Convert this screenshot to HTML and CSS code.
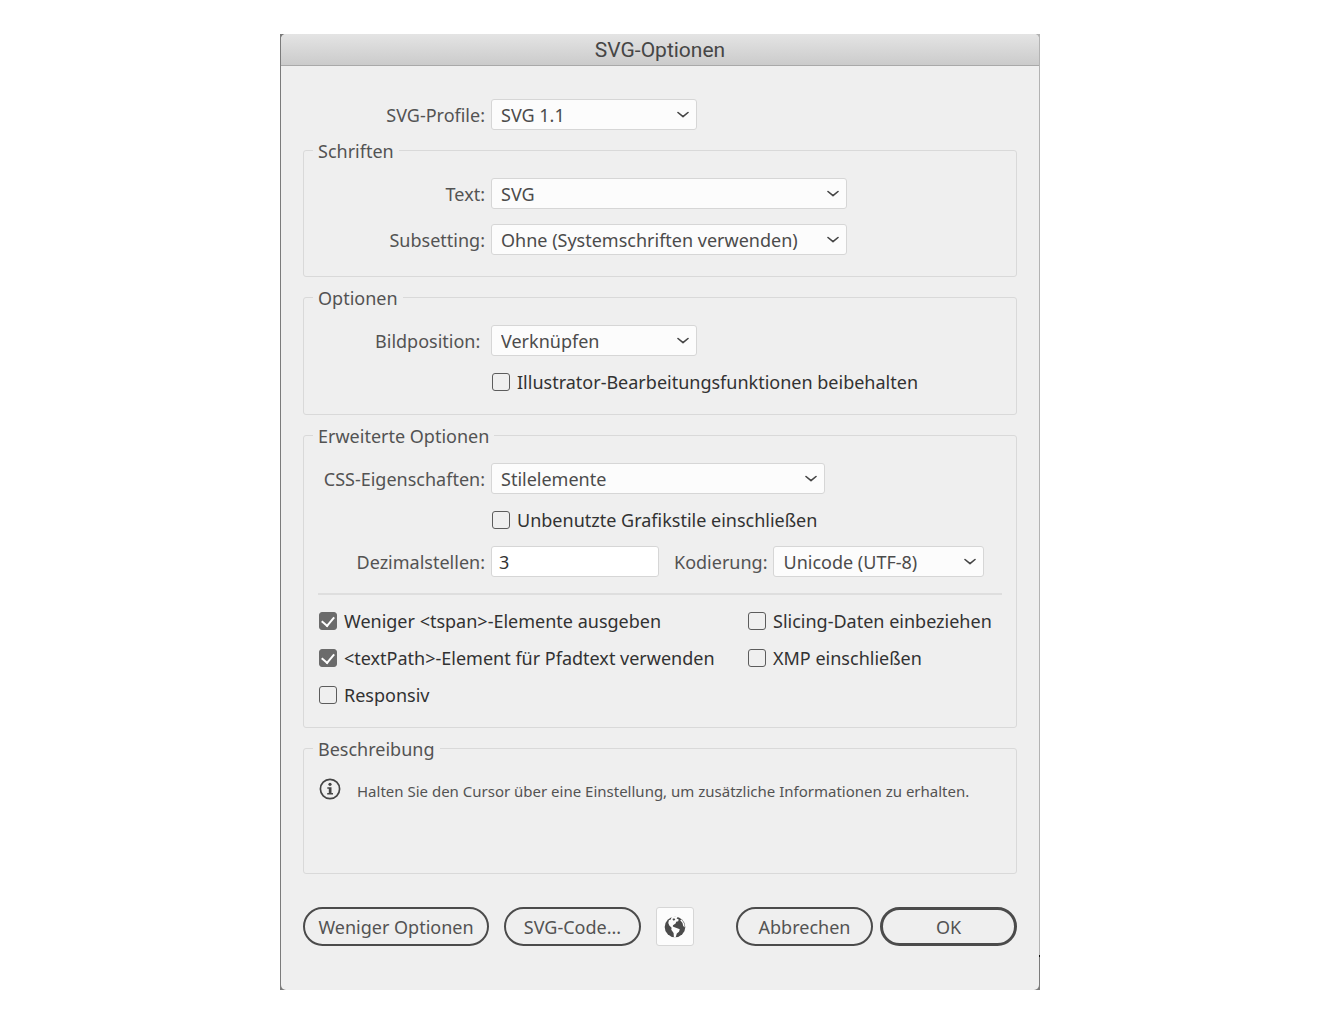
FILE: index.html
```html
<!DOCTYPE html>
<html lang="de">
<head>
    <meta charset="UTF-8">
    <meta name="viewport" content="width=device-width, initial-scale=1.0">
    <title>SVG-Optionen</title>
    <link rel="stylesheet" href="styles.css">
</head>
<body>
    <svg width="0" height="0" class="sprite" aria-hidden="true">
        <symbol id="chevron" viewBox="0 0 12 8">
            <path d="M1 1.500 L6 5.700 L11 1.500" fill="none" stroke="#454545" stroke-width="1.600" stroke-linecap="round" stroke-linejoin="round"/>
        </symbol>
    </svg>

    <div class="window">
        <form class="dialog">
            <header class="titlebar">
                <h1>SVG-Optionen</h1>
            </header>

            <div class="content">
                <div class="row profile-row">
                    <label class="row-label" for="profile">SVG-Profile:</label>
                    <span class="select select-small">
                        <select id="profile"><option>SVG 1.1</option></select>
                        <svg class="chevron"><use href="#chevron"/></svg>
                    </span>
                </div>

                <fieldset>
                    <legend>Schriften</legend>
                    <div class="rows">
                        <div class="row">
                            <label class="row-label" for="text">Text:</label>
                            <span class="select select-large">
                                <select id="text"><option>SVG</option></select>
                                <svg class="chevron"><use href="#chevron"/></svg>
                            </span>
                        </div>
                        <div class="row">
                            <label class="row-label" for="subsetting">Subsetting:</label>
                            <span class="select select-large">
                                <select id="subsetting"><option>Ohne (Systemschriften verwenden)</option></select>
                                <svg class="chevron"><use href="#chevron"/></svg>
                            </span>
                        </div>
                    </div>
                </fieldset>

                <fieldset>
                    <legend>Optionen</legend>
                    <div class="rows">
                        <div class="row">
                            <label class="row-label" for="position">Bildposition:&nbsp;</label>
                            <span class="select select-small">
                                <select id="position"><option>Verknüpfen</option></select>
                                <svg class="chevron"><use href="#chevron"/></svg>
                            </span>
                        </div>
                        <label class="check indent"><input type="checkbox">Illustrator-Bearbeitungsfunktionen beibehalten</label>
                    </div>
                </fieldset>

                <fieldset>
                    <legend>Erweiterte Optionen</legend>
                    <div class="rows">
                        <div class="row">
                            <label class="row-label" for="css">CSS-Eigenschaften:</label>
                            <span class="select select-medium">
                                <select id="css"><option>Stilelemente</option></select>
                                <svg class="chevron"><use href="#chevron"/></svg>
                            </span>
                        </div>
                        <label class="check indent"><input type="checkbox">Unbenutzte Grafikstile einschließen</label>
                        <div class="row">
                            <label class="row-label" for="decimals">Dezimalstellen:</label>
                            <input class="number" id="decimals" type="text" value="3">
                            <label class="encoding-label" for="encoding">Kodierung:</label>
                            <span class="select select-encoding">
                                <select id="encoding"><option>Unicode (UTF-8)</option></select>
                                <svg class="chevron"><use href="#chevron"/></svg>
                            </span>
                        </div>
                        <hr>
                        <div class="checks">
                            <label class="check"><input type="checkbox" checked>Weniger &lt;tspan&gt;-Elemente ausgeben</label>
                            <label class="check"><input type="checkbox">Slicing-Daten einbeziehen</label>
                            <label class="check"><input type="checkbox" checked>&lt;textPath&gt;-Element für Pfadtext verwenden</label>
                            <label class="check"><input type="checkbox">XMP einschließen</label>
                            <label class="check"><input type="checkbox">Responsiv</label>
                        </div>
                    </div>
                </fieldset>

                <fieldset class="description">
                    <legend>Beschreibung</legend>
                    <div class="hint">
                        <svg width="22" height="22" viewBox="0 0 22 22" aria-hidden="true">
                            <circle cx="11" cy="11" r="9.600" fill="none" stroke="#454545" stroke-width="1.700"/>
                            <circle cx="11" cy="6.300" r="1.600" fill="#454545"/>
                            <path d="M8.300 9.200h4.200v5.800h1.500v1.500H8.200V15h1.600v-4.300H8.300z" fill="#454545"/>
                        </svg>
                        <p>Halten Sie den Cursor über eine Einstellung, um zusätzliche Informationen zu erhalten.</p>
                    </div>
                </fieldset>

                <footer class="buttons">
                    <button type="button" class="button button-wide">Weniger Optionen</button>
                    <button type="button" class="button">SVG-Code...</button>
                    <button type="button" class="web-button" aria-label="Im Browser anzeigen">
                        <svg width="22" height="22" viewBox="0 0 22 22" aria-hidden="true">
                            <circle cx="11" cy="11" r="10.300" fill="#4b4b4b"/>
                            <path d="M7.500 1.300 L10.200 0.500 L13.500 1 L12.600 2.600 L14.700 3.500 L14.200 5.200 L12.200 5.800 L11.600 7.600 L9 9.200 L8.800 10.600 L10.600 11.200 L15.800 13.200 L15 15.800 L12.800 17.600 L11.600 21.400 L9.900 21.300 L9.600 17 L7.300 13.800 L7.600 11.800 L5.300 9.600 L4.300 7 L4.900 4.300 L6.800 3.400 Z" fill="#fcfcfc"/>
                            <path d="M8.300 3 L10.200 2.200 L11.300 3.700 L9.700 4.800 Z" fill="#4b4b4b"/>
                            <path d="M16.200 4.300 L17.700 3.500 L20.300 7.700 L20.700 11.500 L19.200 10 L18.500 7 Z" fill="#fcfcfc"/>
                        </svg>
                    </button>
                    <span class="confirm">
                        <button type="button" class="button">Abbrechen</button>
                        <button type="submit" class="button button-default">OK</button>
                    </span>
                </footer>
            </div>
        </form>
    </div>
</body>
</html>
```

FILE: styles.css
```css
* {
    box-sizing: border-box;
}

body {
    margin: 0;
    background: #fff;
    color: #535353;
    font-family: "Noto Sans", "Open Sans", sans-serif;
    font-size: 18px;
    line-height: 22px;
}

.sprite {
    position: absolute;
}

/* The strip behind the dialog shows at its sides and corners */
.window {
    max-width: 760px;
    margin: 34px auto;
    padding: 0 1px;
    background:
        linear-gradient(#7b7b7b, #7b7b7b) left / 50% 100% no-repeat,
        linear-gradient(to top, #7b7b7b 33px, #111 33px, #111 35px, #b3b3b3 35px);
}

.dialog {
    background: #efefef;
    border-radius: 5px;
    overflow: hidden;
}

.titlebar {
    height: 32px;
    background: linear-gradient(#e4e4e4, #cbcbcb);
    border-bottom: 1px solid #a9a9a9;
}

.titlebar h1 {
    margin: 0;
    color: #464646;
    font-family: Roboto, "Liberation Sans", sans-serif;
    font-size: 21px;
    font-weight: normal;
    line-height: 32px;
    text-align: center;
}

.content {
    padding: 33px 22px 44px;
}

fieldset {
    min-width: 0;
    margin: 7px 0 0;
    padding: 15px 14px 21px;
    border: 1px solid #d9d9d9;
    border-radius: 3px;
}

legend {
    margin-left: -5px;
    padding: 2px 5px 0;
    line-height: 24px;
}

.rows {
    display: flex;
    flex-direction: column;
    gap: 15px;
}

.row {
    display: flex;
    align-items: center;
    gap: 6px;
}

.profile-row {
    padding: 0 15px;
}

.row-label {
    width: 167px;
    text-align: right;
    white-space: nowrap;
}

.select {
    position: relative;
    height: 31px;
}

.select-small {
    width: 206px;
}

.select-encoding {
    width: 211px;
}

.select-medium {
    width: 334px;
}

.select-large {
    width: 356px;
}

.select select {
    width: 100%;
    height: 100%;
    padding: 0 30px 0 9px;
    appearance: none;
    background: #fcfcfc;
    border: 1px solid #d6d6d6;
    border-radius: 3px;
    color: #4b4b4b;
    font: inherit;
}

.chevron {
    position: absolute;
    top: 12px;
    right: 8px;
    width: 12px;
    height: 8px;
    pointer-events: none;
}

.number {
    width: 168px;
    height: 31px;
    padding: 0 7px;
    background: #fff;
    border: 1px solid #d6d6d6;
    border-radius: 3px;
    color: #323232;
    font: inherit;
}

.encoding-label {
    margin-left: 9px;
}

.check {
    display: flex;
    align-items: center;
    gap: 7px;
    color: #323232;
    white-space: nowrap;
}

.check input {
    display: grid;
    place-items: center;
    flex: none;
    width: 18px;
    height: 18px;
    margin: 0 0 0 1px;
    appearance: none;
    border: 1px solid #5c5c5c;
    border-radius: 3px;
}

.check input:checked {
    background: #6b6b6b;
    border-color: #6b6b6b;
}

.check input:checked::after {
    content: "";
    width: 6px;
    height: 10px;
    margin-top: -3px;
    border: solid #fff;
    border-width: 0 2px 2px 0;
    transform: rotate(40deg);
}

.indent {
    margin-left: 173px;
}

hr {
    width: 100%;
    height: 2px;
    margin: 1px 0 0;
    background: #dedede;
    border: 0;
}

.checks {
    display: grid;
    grid-template-columns: 429px 1fr;
    row-gap: 15px;
}

.description {
    min-height: 139px;
}

.hint {
    display: flex;
    align-items: center;
    gap: 16px;
    padding-left: 1px;
}

.hint svg {
    flex: none;
}

.hint p {
    margin: 4px 0 0;
    font-size: 15px;
    white-space: nowrap;
}

.buttons {
    display: flex;
    gap: 15px;
    margin-top: 33px;
}

.button {
    width: 137px;
    height: 39px;
    padding: 0;
    background: none;
    border: 2px solid #4b4b4b;
    border-radius: 20px;
    color: #535353;
    font: inherit;
    white-space: nowrap;
}

.button-wide {
    width: 186px;
}

.button-default {
    border-width: 3px;
}

.web-button {
    display: grid;
    place-items: center;
    width: 38px;
    height: 39px;
    padding: 0;
    background: #fcfcfc;
    border: 1px solid #d6d6d6;
    border-radius: 3px;
}

.confirm {
    display: flex;
    gap: 7px;
    margin-left: auto;
}
```
